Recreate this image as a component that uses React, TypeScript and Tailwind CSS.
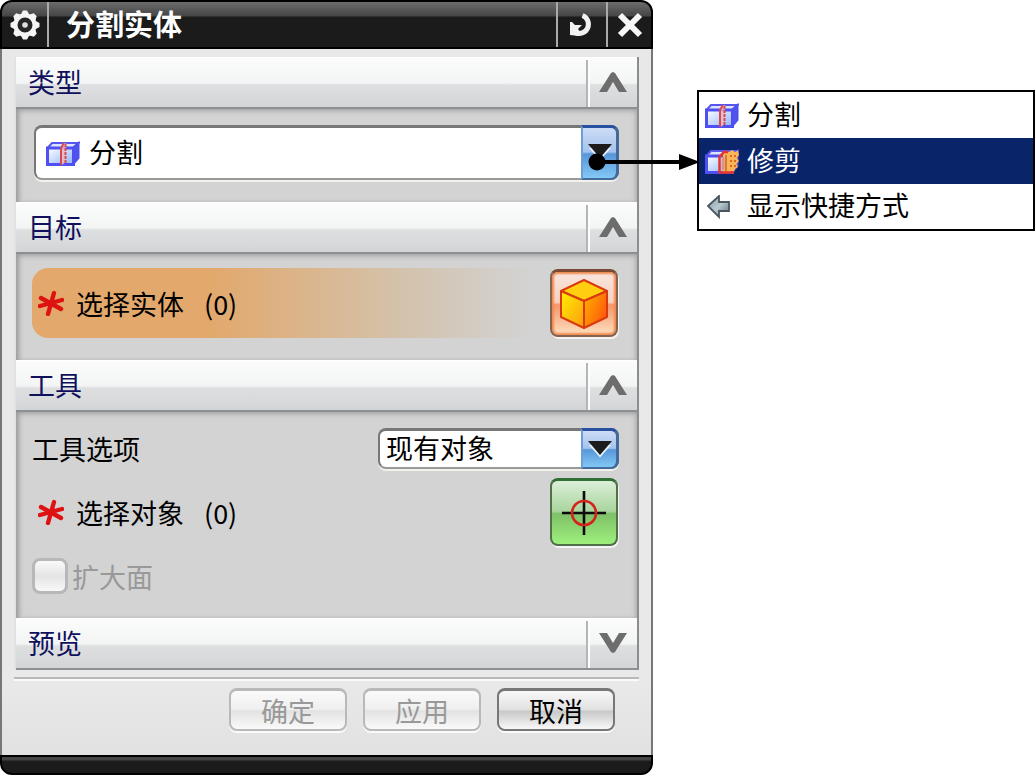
import React, { useState } from 'react';
import clsx from 'clsx';

const cjk = "font-['Noto_Sans_CJK_SC',sans-serif]";

function GearIcon() {
  const teeth = [0, 45, 90, 135, 180, 225, 270, 315];
  return (
    <svg viewBox="0 0 32 32" className="w-8 h-8" aria-hidden="true">
      <g fill="#f4f4f4">
        {teeth.map((a) => (
          <path key={a} d="M11 7 L14 1.5 H18 L21 7 Z" transform={`rotate(${a} 16 16)`} />
        ))}
      </g>
      <circle cx="16" cy="16" r="9.5" fill="#252525" stroke="#f4f4f4" strokeWidth="4" />
      <circle cx="16" cy="16" r="2.8" fill="#dedede" />
    </svg>
  );
}

function ResetIcon() {
  return (
    <svg viewBox="0 0 26 26" className="w-[26px] h-[26px]" aria-hidden="true">
      <path d="M13.5 3.5 A9.3 9.3 0 1 1 6 20.5" fill="none" stroke="#f2f2f2" strokeWidth="5" />
      <path d="M1 10 H3 L6 13 H13 L9 17 L12 21 L10 24 L1 23 Z" fill="#f2f2f2" />
    </svg>
  );
}

function CloseIcon() {
  return (
    <svg viewBox="0 0 26 26" className="w-[26px] h-[26px]" aria-hidden="true">
      <path d="M3 3 L23 23 M23 3 L3 23" stroke="#f6f6f6" strokeWidth="6" />
    </svg>
  );
}

function SplitIcon({ trimmed = false }: { trimmed?: boolean }) {
  const id = trimmed ? 'trim-face' : 'split-face';
  return (
    <svg viewBox="0 0 34 25" className="w-[34px] h-[25px] shrink-0" aria-hidden="true">
      <defs>
        <linearGradient id={id} x1="0" y1="0" x2="1" y2="1">
          <stop offset="0" stopColor="#ffffff" />
          <stop offset="1" stopColor="#8cb2f8" />
        </linearGradient>
      </defs>
      <path d="M1.5 7 L6 2 H32.5 L27 7 Z" fill="#dbe4ff" stroke="#5656ee" strokeWidth="2" />
      <path d="M27 7 L32.5 2 V17 L27 23.5 Z" fill="#4f56ee" stroke="#4f4fee" strokeWidth="2" />
      <rect x="1.5" y="7" width="26" height="16.5" fill={`url(#${id})`} stroke="#5050f2" strokeWidth="3" />
      {trimmed ? (
        <>
          <path d="M18 5 L21 2 L24 3 L27 1 L30 3 L33 1.5 L34 6 L32 9 L34 12 L31.5 15 L33 18 L30 20 L29 23 L26 22 L23 24 H18 Z" fill="#fbb457" />
          <path d="M25 7 H33 M25 12 H33 M25 17 H32" stroke="#dc6a1c" strokeWidth="2" strokeDasharray="2 2" />
          <path d="M14.5 24 V8 L19 3 H23 M14 23.5 H29" fill="none" stroke="#e8342c" strokeWidth="2.5" />
          <path d="M18 8 V21" stroke="#d9958c" strokeWidth="3" />
          <path d="M21 6 V22" stroke="#c9682f" strokeWidth="1.5" />
        </>
      ) : (
        <>
          <path d="M14.5 23.5 V7 L17 2 H20 V20 L17 23.5 Z" fill="#eab8c6" fillOpacity="0.8" />
          <path d="M15 24 V7 L18 2" fill="none" stroke="#d8494f" strokeWidth="2" />
          <path d="M19.5 3 V22" stroke="#d8494f" strokeWidth="2" strokeDasharray="3 1" />
        </>
      )}
    </svg>
  );
}

function ShortcutIcon() {
  return (
    <svg viewBox="0 0 24 24" className="w-6 h-6 shrink-0" aria-hidden="true">
      <defs>
        <linearGradient id="shortcut" x1="0" y1="0" x2="1" y2="1">
          <stop offset="0" stopColor="#8397a4" />
          <stop offset="0.5" stopColor="#b9c8d0" />
          <stop offset="1" stopColor="#5d6f7c" />
        </linearGradient>
      </defs>
      <path d="M1 11 L12 1 V7 H22 V16 H12 V22 Z" fill="url(#shortcut)" stroke="#4b565e" strokeWidth="1.8" />
    </svg>
  );
}

function RequiredMark() {
  return (
    <svg viewBox="0 0 26 26" className="w-[26px] h-[26px] shrink-0" aria-hidden="true">
      <path d="M16 3 L10 24 M3 8 L23 19 M2 16 L24 10" stroke="#df1212" strokeWidth="4.4" strokeLinecap="round" />
    </svg>
  );
}

function CubeIcon() {
  return (
    <svg viewBox="0 0 50 50" className="w-[50px] h-[50px]" aria-hidden="true">
      <defs>
        <linearGradient id="cube-left" x1="0" y1="0" x2="1" y2="1">
          <stop offset="0" stopColor="#fff000" />
          <stop offset="1" stopColor="#ff9a10" />
        </linearGradient>
        <linearGradient id="cube-right" x1="0" y1="0" x2="1" y2="0.6">
          <stop offset="0" stopColor="#ffb400" />
          <stop offset="1" stopColor="#ff5a0a" />
        </linearGradient>
      </defs>
      <g stroke="#d93a10" strokeWidth="2" strokeLinejoin="round">
        <path d="M25 1 L48 12 L25 22 L2 12 Z" fill="#ffcf10" />
        <path d="M2 12 L25 22 V49 L2 38 Z" fill="url(#cube-left)" />
        <path d="M48 12 L25 22 V49 L48 38 Z" fill="url(#cube-right)" />
      </g>
    </svg>
  );
}

function TargetIcon() {
  return (
    <svg viewBox="0 0 44 44" className="w-11 h-11" aria-hidden="true">
      <path d="M22 0 V44 M0 22 H44" stroke="#0b0b0b" strokeWidth="2.6" />
      <circle cx="22" cy="22" r="12" fill="none" stroke="#d3231b" strokeWidth="2.6" />
    </svg>
  );
}

function SectionHeader({ title, open = true }: { title: string; open?: boolean }) {
  return (
    <div className="flex h-[52px] border-t border-white border-b-2 border-b-[#8d9092] bg-[linear-gradient(#fbfcfb_0%,#f3f5f5_51%,#dddfe1_55%,#d3d5d6_100%)]">
      <h2 className="flex-1 flex items-center pl-3 pb-0.5 text-[27px] leading-none text-[#10105c]">{title}</h2>
      <button
        type="button"
        aria-label={title}
        aria-expanded={open}
        className="mt-0.5 pb-1 w-[51px] flex items-center justify-center border-l-2 border-[#b3b5b6] shadow-[inset_2px_0_0_#fdfdfd]"
      >
        <svg viewBox="0 0 28 20" className={clsx('w-7 h-5', !open && 'rotate-180')} aria-hidden="true">
          <path d="M0 20 L12 1 L14 0 L16 1 L28 20 H20 L14 10 L8 20 Z" fill="#6d6d6d" />
        </svg>
      </button>
    </div>
  );
}

function SelectArrow({ tall = false }: { tall?: boolean }) {
  return (
    <span
      className={clsx(
        'pointer-events-none absolute inset-y-0 right-0 w-[38px] flex items-center justify-center rounded-r-lg border-2 border-r-[3px] border-[#426b9a] border-t-[3px] border-t-[#2950a0] border-l-[#6c9fd6]',
        'bg-[linear-gradient(#cddcf6_0%,#a4c3ed_48%,#5796d8_52%,#82c8f4_100%)]',
        tall && 'pb-0.5'
      )}
    >
      <svg viewBox="0 0 26 18" className="w-[26px] h-[18px]" aria-hidden="true">
        <path d="M2 5 L13 17.5 L24 5 Z" fill="#e8f3ff" />
        <path d="M1 1 H25 L13 15 Z" fill="#1c1c1c" />
      </svg>
    </span>
  );
}

// leader line that ties the type list to its expanded options
function Leader() {
  return (
    <svg viewBox="0 0 112 20" className="pointer-events-none absolute z-10 top-7 left-[calc(100%-31px)] w-28 h-5" aria-hidden="true">
      <circle cx="9" cy="9" r="8.5" fill="#000" />
      <path d="M9 9 H94" stroke="#000" strokeWidth="4" />
      <path d="M91 1 L112 9 L91 17 Z" fill="#000" />
    </svg>
  );
}

const selectClass =
  'block w-full appearance-none rounded-lg border-2 border-t-[3px] border-[#777] border-b-[#999] bg-white pr-10 pb-1 text-[27px] leading-none text-black shadow-[0_2px_0_#f3f1ec]';
const contentClass =
  'bg-[#d3d3d3] shadow-[inset_5px_0_5px_-2px_#9b9b9b,inset_-4px_0_5px_-3px_#a5a5a5,inset_0_5px_5px_-3px_#aaa]';
const footerButton =
  'w-[118px] h-[43px] rounded-lg border-2 border-t-[3px] text-[27px] leading-none shadow-[0_2px_0_#fafafa]';
const footerOff =
  'border-[#b9b9b9] text-[#999] bg-[linear-gradient(#fafafa_0%,#efefef_48%,#e2e2e2_52%,#fafafa_100%)]';
const footerOn =
  'border-[#777] text-black bg-[linear-gradient(#f8f8f8_0%,#e2e2e2_48%,#c9c9c9_54%,#f8f8f8_100%)]';
const toolButton =
  'w-[68px] h-[68px] shrink-0 flex items-center justify-center rounded-lg border-2 border-t-[3px] shadow-[1px_2px_0_#f4f4f4]';

function Dialog({ type, onType }: { type: string; onType: (t: string) => void }) {
  return (
    <section aria-labelledby="dialog-title" className="min-w-0">
      <header className="flex h-[49px] rounded-t-xl border-2 border-black bg-[linear-gradient(#6c6c6c_0px,#454545_14px,#1b1b1b_15px,#1b1b1b_100%)]">
        <button type="button" aria-label="设置" className="w-[47px] flex items-center justify-center border-r-2 border-[#aaa]">
          <GearIcon />
        </button>
        <h1 id="dialog-title" className="flex-1 flex items-center pl-[17px] pb-0.5 text-[29px] leading-none font-bold text-white">
          分割实体
        </h1>
        <button type="button" aria-label="重置" className="w-[50px] flex items-center justify-center border-l-2 border-[#aaa]">
          <ResetIcon />
        </button>
        <button type="button" aria-label="关闭" className="w-[45px] flex items-center justify-center border-l-2 border-[#aaa]">
          <CloseIcon />
        </button>
      </header>

      <div className="border-x-2 border-[#777] bg-[linear-gradient(#e8e8e8_0%,#e9e9e9_90%,#e1e1e1_100%)] px-3 pt-2 pb-6">
        <div className="border-l-2 border-r-2 border-l-[#e2e2e2] border-r-[#8d8d8d]">
          <SectionHeader title="类型" />
          <div className={clsx(contentClass, 'px-[18px] pt-4 pb-[22px]')}>
            <div className="relative">
              <select
                aria-label="类型"
                value={type}
                onChange={(e) => onType(e.target.value)}
                className={clsx(selectClass, 'h-[55px] pl-[53px]')}
              >
                <option>分割</option>
                <option>修剪</option>
              </select>
              <span className="pointer-events-none absolute inset-y-0 left-3 flex items-center pt-0.5">
                <SplitIcon trimmed={type === '修剪'} />
              </span>
              <SelectArrow tall />
              <Leader />
            </div>
          </div>

          <SectionHeader title="目标" />
          <div className={clsx(contentClass, 'px-4 pt-3.5 pb-[22px]')}>
            <div className="flex h-[70px] items-center rounded-l-2xl bg-[linear-gradient(to_right,#e2a86c_0%,#e2a86c_30%,#d3c3ae_64%,#d3d3d3_85%)] pl-1.5 pr-[3px]">
              <RequiredMark />
              <span className="ml-3 text-[27px] leading-none">选择实体</span>
              <span className="ml-5 flex-1 text-[27px] leading-none">(0)</span>
              <button
                type="button"
                aria-label="选择实体"
                className={clsx(toolButton, 'border-[#85644f] border-t-[#7a4a34] shadow-[inset_0_0_2px_2px_#f08a50,1px_2px_0_#f4f4f4] bg-[linear-gradient(#f7e6e0_0%,#fbd0bb_48%,#f6956a_52%,#fde0c0_100%)]')}
              >
                <CubeIcon />
              </button>
            </div>
          </div>

          <SectionHeader title="工具" />
          <div className={clsx(contentClass, 'px-4 pt-4 pb-6')}>
            <div className="flex items-center justify-between pr-[2px]">
              <label htmlFor="tool-option" className="text-[27px] leading-none">工具选项</label>
              <div className="relative w-[241px]">
                <select id="tool-option" className={clsx(selectClass, 'h-[41px] pl-1.5')}>
                  <option>现有对象</option>
                </select>
                <SelectArrow />
              </div>
            </div>
            <div className="mt-[9px] flex items-center pl-1.5 pr-[3px]">
              <RequiredMark />
              <span className="ml-3 text-[27px] leading-none">选择对象</span>
              <span className="ml-5 flex-1 text-[27px] leading-none">(0)</span>
              <button
                type="button"
                aria-label="选择对象"
                className={clsx(toolButton, 'border-[#4f7048] border-t-[#2f6e35] bg-[linear-gradient(#dcefd8_0%,#a9d59e_48%,#7fc068_52%,#9df07c_100%)]')}
              >
                <TargetIcon />
              </button>
            </div>
            <label className="mt-3 flex h-9 items-center gap-1 text-[27px] leading-none text-[#999]">
              <input
                type="checkbox"
                disabled
                className="w-9 h-9 appearance-none rounded-lg border-[3px] border-[#b8b8b8] bg-[linear-gradient(#fafafa,#e4e4e4_50%,#f8f8f8)]"
              />
              扩大面
            </label>
          </div>

          <SectionHeader title="预览" open={false} />
        </div>

        <hr className="mt-[7px] border-t-2 border-[#b9b9b9] shadow-[0_2px_0_#fafafa]" />

        <div className="mt-[9px] flex justify-end gap-4 pr-6">
          <button type="button" disabled className={clsx(footerButton, footerOff)}>确定</button>
          <button type="button" disabled className={clsx(footerButton, footerOff)}>应用</button>
          <button type="button" className={clsx(footerButton, footerOn)}>取消</button>
        </div>
      </div>

      <footer className="h-5 rounded-b-xl border-2 border-black bg-[linear-gradient(#444_0px,#444_3px,#1b1b1b_4px)]" />
    </section>
  );
}

function TypeMenu({ onType }: { onType: (t: string) => void }) {
  const item = 'flex w-full items-center text-[27px] leading-none text-left';
  return (
    <ul className="mt-[90px] h-fit min-w-0 border-2 border-black bg-white">
      <li>
        <button type="button" onClick={() => onType('分割')} className={clsx(item, 'h-[46px] pl-1.5 gap-2')}>
          <SplitIcon />
          <span className="pb-1">分割</span>
        </button>
      </li>
      <li>
        <button type="button" onClick={() => onType('修剪')} className={clsx(item, 'h-[46px] pl-1.5 gap-2 bg-[#0a246a] text-white')}>
          <SplitIcon trimmed />
          <span className="pb-1">修剪</span>
        </button>
      </li>
      <li>
        <button type="button" className={clsx(item, 'h-[45px] pl-2 gap-4')}>
          <ShortcutIcon />
          <span className="pb-1">显示快捷方式</span>
        </button>
      </li>
    </ul>
  );
}

export default function App() {
  const [type, setType] = useState('分割');

  return (
    <main className={clsx(cjk, 'grid grid-cols-[minmax(0,653fr)_minmax(0,338fr)] gap-11 bg-white text-black')}>
      <Dialog type={type} onType={setType} />
      <TypeMenu onType={setType} />
    </main>
  );
}
